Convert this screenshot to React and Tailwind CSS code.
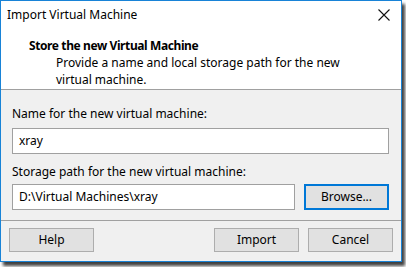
const FONT = { fontFamily: '"Noto Sans", "Open Sans", Arial, sans-serif' }

function Btn({ children, className = '' }) {
  return (
    <button
      className={`h-[24px] w-[85px] bg-[#e1e1e1] border border-[#adadad] text-[12px] text-black flex items-center justify-center ${className}`}
    >
      {children}
    </button>
  )
}

export default function App() {
  return (
    <div className="w-[406px] h-[267px] bg-white overflow-hidden" style={FONT}>
      <div className="w-[402px] h-[262px] border border-[#1883d7] bg-[#f0f0f0] flex flex-col shadow-[3px_4px_3px_rgba(0,0,0,0.75)]">
        {/* Title bar */}
        <div className="h-[29px] bg-white flex items-center justify-between pl-[6px] pr-[10px] pb-[1px]">
          <span className="text-[12px] text-black">Import Virtual Machine</span>
          <svg width="12" height="12" viewBox="0 0 12 12" className="mr-[1px]">
            <path d="M0.5 0.5 L11.5 11.5 M11.5 0.5 L0.5 11.5" stroke="#111" strokeWidth="1.1" fill="none" />
          </svg>
        </div>

        {/* Header */}
        <div className="h-[60px] bg-white pl-[28px] pt-[7px] border-b border-[#a0a0a0]">
          <div className="text-[12px] font-bold leading-[17px] tracking-[-0.4px] text-black">Store the new Virtual Machine</div>
          <div className="pl-[27px] text-[12px] leading-[17px] text-black">
            Provide a name and local storage path for the new
            <br />
            virtual machine.
          </div>
        </div>

        {/* Body */}
        <div className="flex flex-col px-[11px] pt-[16px]">
          <div className="text-[12px] leading-[16px] text-black">Name for the new virtual machine:</div>
          <div className="mt-[6px] h-[26px] w-[377px] bg-white border border-[#a0a0a0] flex items-center px-[6px] text-[12px] text-black">
            xray
          </div>
          <div className="mt-[10px] text-[12px] leading-[16px] text-black">Storage path for the new virtual machine:</div>
          <div className="mt-[4px] flex gap-[9px]">
            <div className="h-[26px] w-[283px] bg-white border border-[#a0a0a0] flex items-center px-[6px] text-[12px] text-black">
              D:\Virtual Machines\xray
            </div>
            <button className="h-[26px] w-[85px] bg-[#e1e1e1] border-2 border-[#0078d7] text-[12px] text-black flex items-center justify-center">
              Browse...
            </button>
          </div>
        </div>

        {/* Footer */}
        <div className="mt-[10px] border-t border-[#a0a0a0] flex items-center px-[8px] pt-[7px]">
          <Btn>Help</Btn>
          <div className="flex-1" />
          <Btn>Import</Btn>
          <Btn className="ml-[9px]">Cancel</Btn>
        </div>
      </div>
    </div>
  )
}
